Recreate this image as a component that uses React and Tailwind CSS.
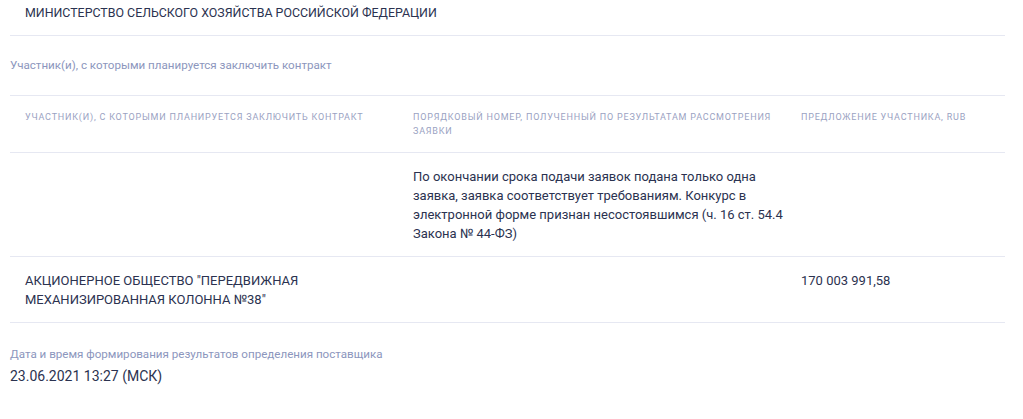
export default function App() {
  const cols = "grid grid-cols-[388px_388px_1fr] pl-[15px] border-b border-[#e6e8f2]";
  return (
    <div className="min-h-screen bg-white pl-[10px] pr-[18px] font-['Roboto',sans-serif] text-[#2b3250]">
      <div className="pl-[15px] pt-[3px] pb-[13px] text-[12.4px] leading-[19px] border-b border-[#e6e8f2]">
        МИНИСТЕРСТВО СЕЛЬСКОГО ХОЗЯЙСТВА РОССИЙСКОЙ ФЕДЕРАЦИИ
      </div>
      <div className="pt-[21px] pb-[22px] text-[11.6px] leading-[16px] text-[#8c96bd] border-b border-[#e6e8f2]">
        Участник(и), с которыми планируется заключить контракт
      </div>

      <div className={cols + " py-[14px] text-[9px] leading-[14px] tracking-[0.8px] uppercase text-[#9aa2c2]"}>
        <div className="pr-[20px]">Участник(и), с которыми планируется заключить контракт</div>
        <div className="pr-[10px]">Порядковый номер, полученный по результатам рассмотрения заявки</div>
        <div>Предложение участника, RUB</div>
      </div>

      <div className={cols + " pt-[14px] pb-[13px] text-[13px] leading-[19px]"}>
        <div></div>
        <div className="pr-[10px]">
          По окончании срока подачи заявок подана только одна заявка, заявка соответствует требованиям. Конкурс в электронной форме признан несостоявшимся (ч. 16 ст. 54.4 Закона № 44-ФЗ)
        </div>
        <div></div>
      </div>

      <div className={cols + " pt-[14px] pb-[13px] text-[13px] leading-[19px]"}>
        <div className="pr-[20px]">АКЦИОНЕРНОЕ ОБЩЕСТВО "ПЕРЕДВИЖНАЯ МЕХАНИЗИРОВАННАЯ КОЛОННА №38"</div>
        <div></div>
        <div>170 003 991,58</div>
      </div>

      <div className="pt-[23px] text-[11.6px] leading-[16px] text-[#8c96bd]">
        Дата и время формирования результатов определения поставщика
      </div>
      <div className="pt-[4px] text-[14px] leading-[20px]">23.06.2021 13:27 (МСК)</div>
    </div>
  );
}
